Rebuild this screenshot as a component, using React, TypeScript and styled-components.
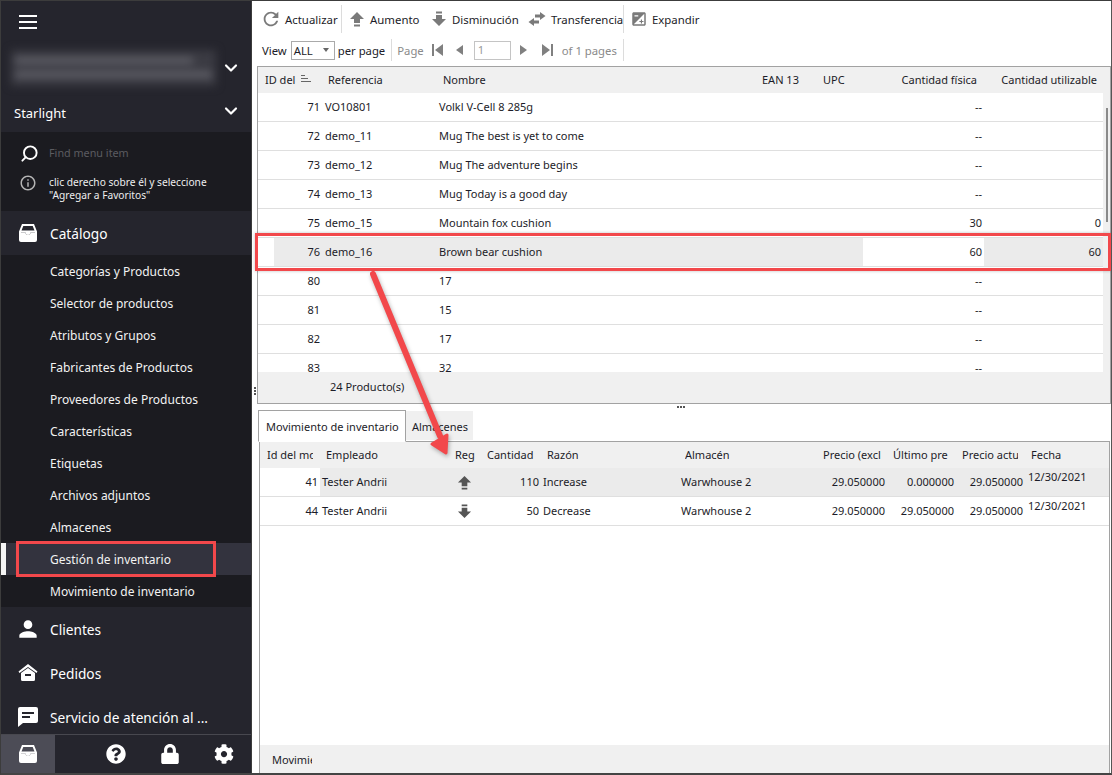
import React from 'react';
import styled, { createGlobalStyle } from 'styled-components';
import { MdExposure, MdInfoOutline, MdPerson, MdRefresh } from 'react-icons/md';
import { FaCog, FaLock, FaQuestionCircle } from 'react-icons/fa';
import { FiChevronDown, FiSearch } from 'react-icons/fi';

const GlobalStyle = createGlobalStyle`
    html, body {
        margin: 0;
        padding: 0;
        background: #fff;
    }
    body {
        font-family: "Noto Sans", "Open Sans", sans-serif;
        font-size: 11px;
        color: #1c1c28;
    }
`;

const TOP_COLUMNS = '64px 114px 322px 61px 44px 121px 119px';
const LOW_COLUMNS = '60px 128px 33px 60px 138px 138px 70px 69px 69px 1fr';

const Window = styled.div`
    position: relative;
    width: 1112px;
    height: 775px;
    box-sizing: border-box;
    display: flex;
    overflow: hidden;
    border-top: 1px solid #3c3c3c;
    border-left: 1px solid #3c3c3c;
    border-right: 1px solid #555;
    border-bottom: 2px solid #444;
`;

/* sidebar */
const Sidebar = styled.aside`
    width: 250px;
    flex: none;
    display: flex;
    flex-direction: column;
    background: #25252d;
    color: #fff;
`;
const NavArea = styled.div`
    flex: 1;
    min-height: 0;
    overflow: hidden;
`;
const Burger = styled.div`
    height: 49px;
    padding: 14px 0 0 18px;
    box-sizing: border-box;
    span {
        display: block;
        width: 18px;
        height: 2px;
        background: #fff;
        margin-bottom: 4px;
    }
`;
const AccountRow = styled.div`
    height: 38px;
    box-sizing: border-box;
    display: flex;
    align-items: center;
    padding: 0 10px 3px;
    justify-content: space-between;
    font-size: 20px;
    svg { stroke-width: 2.6; }
`;
const Blurred = styled.div`
    width: 205px;
    height: 36px;
    background: #3b3b43;
    filter: blur(4px);
    display: flex;
    flex-direction: column;
    justify-content: center;
    gap: 9px;
    padding: 0 4px;
    box-sizing: border-box;
    span {
        display: block;
        height: 5px;
        background: #6a6a72;
    }
    span:first-child { width: 178px; }
`;
const StoreRow = styled.div`
    height: 44px;
    display: flex;
    align-items: center;
    justify-content: space-between;
    padding: 6px 10px 0 13px;
    box-sizing: border-box;
    font-size: 13px;
    svg {
        font-size: 20px;
        stroke-width: 2.6;
        margin-top: -4px;
    }
`;
const SearchBlock = styled.div`
    height: 79px;
    background: #1b1b20;
    padding: 0 0 0 19px;
    box-sizing: border-box;
`;
const SearchLine = styled.div`
    height: 42px;
    display: flex;
    align-items: center;
    gap: 10px;
    color: #5b5b60;
    font-size: 10.8px;
    svg {
        color: #fff;
        font-size: 19px;
        stroke-width: 2.4;
        transform: scaleX(-1);
    }
    span { padding-bottom: 1px; }
`;
const InfoLine = styled.div`
    display: flex;
    gap: 12px;
    font-size: 10.2px;
    line-height: 13px;
    color: #eee;
    svg {
        color: #b4b4b4;
        font-size: 18px;
        margin-left: -1px;
        flex: none;
    }
    div { padding-top: 2px; }
`;
const SectionHead = styled.div`
    height: 44px;
    display: flex;
    align-items: center;
    gap: 12px;
    padding-left: 17px;
    font-size: 13.7px;
    white-space: nowrap;
    svg {
        width: 20px;
        height: 20px;
        flex: none;
        fill: #fff;
    }
    .person {
        width: 26px;
        height: 26px;
        margin: 0 -3px;
    }
`;
const SubMenu = styled.div`
    background: #1b1b20;
`;
const SubItem = styled.div<{ $active?: boolean }>`
    position: relative;
    height: 32px;
    display: flex;
    align-items: center;
    padding-left: 49px;
    font-size: 12px;
    background: ${p => (p.$active ? '#33333e' : 'transparent')};
    box-shadow: ${p => (p.$active ? 'inset 5px 0 0 #f4f4f4' : 'none')};
    color: #f2f2f2;
`;
const MenuMarker = styled.div`
    position: absolute;
    left: 15px;
    top: -2px;
    width: 200px;
    height: 36px;
    box-sizing: border-box;
    border: 3px solid #f2484b;
`;
const SideFooter = styled.div`
    height: 38px;
    flex: none;
    display: flex;
    align-items: center;
    border-top: 1px solid #48484f;
    background: #25252d;
    svg {
        width: 20px;
        height: 20px;
        color: #fff;
        fill: #fff;
    }
`;
const FooterTile = styled.div`
    width: 54px;
    height: 100%;
    background: #4c4c56;
    display: flex;
    align-items: center;
    justify-content: center;
    margin-right: 34px;
`;
const FooterIcon = styled.div`
    width: 54px;
    display: flex;
    justify-content: center;
`;

/* main */
const Main = styled.main`
    flex: 1;
    min-width: 0;
    display: flex;
    flex-direction: column;
    background: #fff;
    border-left: 1px solid #3c3c3c;
`;
const Toolbar = styled.div`
    height: 28px;
    margin-top: 4px;
    display: flex;
    align-items: center;
    padding-left: 11px;
    font-size: 11.4px;
    white-space: nowrap;
`;
const ToolButton = styled.div<{ $width: number; $inset?: number }>`
    width: ${p => p.$width}px;
    padding-left: ${p => p.$inset ?? 0}px;
    box-sizing: border-box;
    flex: none;
    display: flex;
    align-items: center;
    gap: 5px;
    svg {
        flex: none;
        color: #7a7a7a;
        fill: #7a7a7a;
    }
    .refresh { margin: 0 -2px 0 -3px; }
    .expand { margin-right: -1px; }
`;
const ToolSep = styled.div`
    width: 1px;
    height: 28px;
    background: #dcdcdc;
    flex: none;
`;
const Pager = styled.div`
    height: 26px;
    margin: 4px 0 3px;
    display: flex;
    align-items: center;
    padding-left: 10px;
    white-space: nowrap;
    font-size: 11.3px;
`;
const PagerText = styled.span<{ $muted?: boolean; $left?: number }>`
    color: ${p => (p.$muted ? '#8a8a8a' : '#1c1c28')};
    margin-left: ${p => p.$left ?? 0}px;
`;
const Select = styled.div`
    width: 44px;
    height: 19px;
    margin: 0 3px 0 4px;
    box-sizing: border-box;
    border: 1px solid #aaa;
    display: flex;
    align-items: center;
    justify-content: space-between;
    padding: 0 5px 0 2px;
    &::after {
        content: '';
        border: 3px solid transparent;
        border-top: 4px solid #666;
        border-bottom: 0;
    }
`;
const PagerSep = styled.div<{ $gap: number }>`
    width: 1px;
    height: 22px;
    background: #dcdcdc;
    margin: 0 ${p => p.$gap}px 0 6px;
`;
const PagerIcon = styled.svg<{ $gap: number }>`
    width: 12px;
    height: 14px;
    fill: #808080;
    flex: none;
    margin: 0 ${p => p.$gap}px;
`;
const PageInput = styled.div`
    width: 37px;
    height: 19px;
    margin-left: 8px;
    box-sizing: border-box;
    border: 1px solid #c4c4c4;
    color: #999;
    padding-left: 3px;
    line-height: 15px;
`;

const TopPane = styled.div`
    display: flex;
    height: 338px;
    flex: none;
`;
const SideGrip = styled.div`
    width: 5px;
    flex: none;
    display: flex;
    flex-direction: column;
    justify-content: flex-end;
    align-items: center;
    gap: 1px;
    padding-bottom: 9px;
    box-sizing: border-box;
    i {
        display: block;
        width: 2px;
        height: 2px;
        background: #555;
    }
`;
const TopTable = styled.section`
    position: relative;
    flex: 1;
    display: flex;
    box-sizing: border-box;
    border: 1px solid #a2a2a2;
`;
const TopBody = styled.div`
    width: 845px;
    flex: none;
    display: flex;
    flex-direction: column;
`;
const ScrollTrack = styled.div`
    flex: 1;
    background: #f0f0f0;
    padding: 41px 0 0 3px;
    box-sizing: border-box;
    &::before {
        content: '';
        display: block;
        width: 2px;
        height: 114px;
        background: #8a8a8a;
    }
`;
const HeaderRow = styled.div<{ $columns: string }>`
    height: 26px;
    flex: none;
    display: grid;
    grid-template-columns: ${p => p.$columns};
    align-items: center;
    background: #f0f0f0;
    font-size: 11px;
    white-space: nowrap;
`;
const HeadCell = styled.div<{ $left?: number; $right?: number; $end?: boolean }>`
    display: flex;
    align-items: center;
    justify-content: ${p => (p.$end ? 'flex-end' : 'flex-start')};
    margin: 0 ${p => p.$right ?? 7}px 2px ${p => p.$left ?? 6}px;
    overflow: hidden;
    svg {
        margin-left: 6px;
        flex: none;
    }
`;
const Viewport = styled.div`
    height: 279px;
    flex: none;
    overflow: hidden;
`;
const DataRow = styled.div<{ $columns: string; $selected?: boolean }>`
    height: 29px;
    box-sizing: border-box;
    display: grid;
    grid-template-columns: ${p => p.$columns};
    align-items: stretch;
    border-bottom: 1px solid #dfdfdf;
    background: ${p => (p.$selected ? '#ebebeb' : '#fff')};
    font-size: 11px;
    white-space: nowrap;
`;
const Cell = styled.div<{ $end?: boolean; $white?: boolean; $gutter?: boolean; $pad?: number }>`
    display: flex;
    align-items: center;
    justify-content: ${p => (p.$end ? 'flex-end' : 'flex-start')};
    padding: ${p => (p.$end ? '0 2px 2px 0' : `0 0 2px ${p.$pad ?? 3}px`)};
    background: ${p =>
        p.$white ? '#fff' : p.$gutter ? 'linear-gradient(90deg, #fff 16px, transparent 16px)' : 'transparent'};
`;
const DateCell = styled.div`
    padding: 1px 0 0 3px;
`;
const MoveIcon = styled.div`
    display: flex;
    align-items: center;
    padding-left: 9px;
    fill: #555;
`;
const TopFooter = styled.div`
    flex: 1;
    background: #f0f0f0;
    display: flex;
    align-items: center;
    padding-left: 72px;
    padding-bottom: 3px;
    font-size: 11px;
`;
const RowMarker = styled.div`
    position: absolute;
    left: -3px;
    right: -1px;
    top: 166px;
    height: 38px;
    box-sizing: border-box;
    border: 3px solid #f2484b;
    box-shadow: 0 0 3px rgba(0, 0, 0, 0.25);
`;
const SplitBar = styled.div`
    height: 6px;
    flex: none;
    display: flex;
    justify-content: center;
    align-items: center;
    gap: 1px;
    padding-right: 2px;
    i {
        display: block;
        width: 2px;
        height: 2px;
        background: #555;
    }
`;
const LowerPane = styled.div`
    flex: 1;
    min-height: 0;
    margin: 0 1px 0 6px;
    display: flex;
    flex-direction: column;
`;
const Tabs = styled.div`
    display: flex;
    height: 32px;
    flex: none;
    position: relative;
    z-index: 1;
    margin-bottom: -1px;
`;
const Tab = styled.div<{ $active?: boolean }>`
    box-sizing: border-box;
    display: flex;
    align-items: center;
    white-space: nowrap;
    font-size: 11px;
    ${p =>
        p.$active
            ? `
        width: 148px;
        padding: 0 0 0 7px;
        background: #fff;
        border: 1px solid #a2a2a2;
        border-bottom: 1px solid #fff;
    `
            : `
        width: 67px;
        padding: 1px 0 0 6px;
        margin: 1px 0 2px;
        background: #f0f0f0;
    `}
`;
const LowerTable = styled.section`
    flex: 1;
    min-height: 0;
    margin-left: 1px;
    display: flex;
    flex-direction: column;
    box-sizing: border-box;
    border: 1px solid #a2a2a2;
    border-bottom: 0;
`;
const LowerFill = styled.div`
    flex: 1;
`;
const LowerFooter = styled.div`
    height: 28px;
    flex: none;
    background: #f0f0f0;
    display: flex;
    align-items: center;
    font-size: 11px;
    padding-left: 12px;
    span {
        display: block;
        width: 40px;
        overflow: hidden;
    }
`;
const Arrow = styled.svg`
    position: absolute;
    z-index: 2;
    left: 349px;
    top: 259px;
    width: 120px;
    height: 210px;
    filter: drop-shadow(1px 2px 2px rgba(0, 0, 0, 0.3));
`;

const CatalogIcon = () => (
    <svg viewBox="0 0 20 20">
        <path d="M4 1h12l3 7.500V17a2 2 0 0 1-2 2H3a2 2 0 0 1-2-2V8.500zM5.300 3 3.500 7.500h13L14.700 3zM3 9.500V17h14V9.500h-4.500a2.500 2.500 0 0 1-5 0z" fillRule="evenodd" />
        <path d="M3 9.500h4.500a2.500 2.500 0 0 0 5 0H17V17H3z" />
    </svg>
);

const OrdersIcon = () => (
    <svg viewBox="0 0 20 20">
        <path d="M10 1 19.500 8.500l-1 1.500L10 4 1.500 10l-1-1.500zM3 10l7-5 7 5v6.500a1.500 1.500 0 0 1-1.500 1.500h-11A1.500 1.500 0 0 1 3 16.500zM7 11v2h6v-2z" fillRule="evenodd" />
    </svg>
);

const ChatIcon = () => (
    <svg viewBox="0 0 20 20">
        <path d="M2 0h16a2 2 0 0 1 2 2v12a2 2 0 0 1-2 2H5l-5 4V2a2 2 0 0 1 2-2zM4 5v2h12V5zM4 9v2h8V9z" fillRule="evenodd" />
    </svg>
);

const StepUp = ({ size = 16 }: { size?: number }) => (
    <svg viewBox="0 0 14 16" width={size} height={size}>
        <path d="M7 1 14 8H10V12H4V8H0zM4 13.500h6V15.500H4z" />
    </svg>
);

const StepDown = ({ size = 16 }: { size?: number }) => (
    <svg viewBox="0 0 14 16" width={size} height={size}>
        <path d="M4 .5h6V2.500H4zM4 4h6V8h4L7 15 0 8h4z" />
    </svg>
);

const TransferIcon = () => (
    <svg viewBox="0 0 18 16" width={18} height={16}>
        <path d="M12 1 17.500 5 12 9V6.500H7V3.500H12zM6 7v2.500H11v3H6V15L.5 11z" />
    </svg>
);

const SortIcon = () => (
    <svg viewBox="0 0 10 8" width={10} height={8}>
        <path d="M0 0h4v1H0zM0 3h7v1H0zM0 6h10v1H0z" fill="#666" />
    </svg>
);

const menuItems = [
    'Categorías y Productos',
    'Selector de productos',
    'Atributos y Grupos',
    'Fabricantes de Productos',
    'Proveedores de Productos',
    'Características',
    'Etiquetas',
    'Archivos adjuntos',
    'Almacenes',
    'Gestión de inventario',
    'Movimiento de inventario'
];

const products = [
    { id: 71, ref: 'VO10801', name: 'Volkl V-Cell 8 285g', real: '--', usable: '' },
    { id: 72, ref: 'demo_11', name: 'Mug The best is yet to come', real: '--', usable: '' },
    { id: 73, ref: 'demo_12', name: 'Mug The adventure begins', real: '--', usable: '' },
    { id: 74, ref: 'demo_13', name: 'Mug Today is a good day', real: '--', usable: '' },
    { id: 75, ref: 'demo_15', name: 'Mountain fox cushion', real: '30', usable: '0' },
    { id: 76, ref: 'demo_16', name: 'Brown bear cushion', real: '60', usable: '60' },
    { id: 80, ref: '', name: '17', real: '--', usable: '' },
    { id: 81, ref: '', name: '15', real: '--', usable: '' },
    { id: 82, ref: '', name: '17', real: '--', usable: '' },
    { id: 83, ref: '', name: '32', real: '--', usable: '' }
];

const movements = [
    { id: 41, up: true, qty: '110', reason: 'Increase', last: '0.000000' },
    { id: 44, up: false, qty: '50', reason: 'Decrease', last: '29.050000' }
];

const App: React.FC = () => {
    return (
        <Window>
            <GlobalStyle />
            <Sidebar>
                <NavArea>
                    <Burger><span /><span /><span /></Burger>
                    <AccountRow>
                        <Blurred><span /><span /></Blurred>
                        <FiChevronDown />
                    </AccountRow>
                    <StoreRow>
                        Starlight
                        <FiChevronDown />
                    </StoreRow>
                    <SearchBlock>
                        <SearchLine><FiSearch /><span>Find menu item</span></SearchLine>
                        <InfoLine>
                            <MdInfoOutline />
                            <div>clic derecho sobre él y seleccione<br />"Agregar a Favoritos"</div>
                        </InfoLine>
                    </SearchBlock>
                    <SectionHead><CatalogIcon />Catálogo</SectionHead>
                    <SubMenu>
                        {menuItems.map(item => (
                            <SubItem key={item} $active={item === 'Gestión de inventario'}>
                                {item}
                                {item === 'Gestión de inventario' && <MenuMarker />}
                            </SubItem>
                        ))}
                    </SubMenu>
                    <SectionHead><MdPerson className="person" />Clientes</SectionHead>
                    <SectionHead><OrdersIcon />Pedidos</SectionHead>
                    <SectionHead><ChatIcon />Servicio de atención al ...</SectionHead>
                </NavArea>
                <SideFooter>
                    <FooterTile><CatalogIcon /></FooterTile>
                    <FooterIcon><FaQuestionCircle /></FooterIcon>
                    <FooterIcon><FaLock /></FooterIcon>
                    <FooterIcon><FaCog /></FooterIcon>
                </SideFooter>
            </Sidebar>

            <Main>
                <Toolbar>
                    <ToolButton $width={78}><MdRefresh className="refresh" size={22} />Actualizar</ToolButton>
                    <ToolSep />
                    <ToolButton $width={89} $inset={7}><StepUp />Aumento</ToolButton>
                    <ToolButton $width={97}><StepDown />Disminución</ToolButton>
                    <ToolButton $width={95}><TransferIcon />Transferencia</ToolButton>
                    <ToolSep />
                    <ToolButton $width={90} $inset={6}><MdExposure className="expand" size={18} />Expandir</ToolButton>
                </Toolbar>
                <Pager>
                    <PagerText>View</PagerText>
                    <Select>ALL</Select>
                    <PagerText>per page</PagerText>
                    <PagerSep $gap={5} />
                    <PagerText $muted>Page</PagerText>
                    <PagerIcon $gap={8} viewBox="0 0 12 14"><path d="M0 1h2v12H0zM11 1v12L3 7z" /></PagerIcon>
                    <PagerIcon $gap={1} viewBox="0 0 12 14"><path d="M10 2v10L3 7z" /></PagerIcon>
                    <PageInput>1</PageInput>
                    <PagerIcon $gap={7} viewBox="0 0 12 14"><path d="M2 2v10l7-5z" /></PagerIcon>
                    <PagerIcon $gap={4} viewBox="0 0 12 14"><path d="M1 1v12l8-6zM10 1h2v12h-2z" /></PagerIcon>
                    <PagerText $muted $left={5}>of 1 pages</PagerText>
                    <PagerSep $gap={0} />
                </Pager>
                <TopPane>
                    <SideGrip><i /><i /><i /></SideGrip>
                    <TopTable>
                        <TopBody>
                            <HeaderRow $columns={TOP_COLUMNS}>
                                <HeadCell $left={7} $right={0}>ID del<SortIcon /></HeadCell>
                                <HeadCell>Referencia</HeadCell>
                                <HeadCell $left={7}>Nombre</HeadCell>
                                <HeadCell $left={4}>EAN 13</HeadCell>
                                <HeadCell $left={4}>UPC</HeadCell>
                                <HeadCell $end>Cantidad física</HeadCell>
                                <HeadCell $end $left={0} $right={6}>Cantidad utilizable</HeadCell>
                            </HeaderRow>
                            <Viewport>
                                {products.map(p => (
                                    <DataRow key={p.id} $columns={TOP_COLUMNS} $selected={p.id === 76}>
                                        <Cell $end $gutter={p.id === 76}>{p.id}</Cell>
                                        <Cell>{p.ref}</Cell>
                                        <Cell>{p.name}</Cell>
                                        <Cell />
                                        <Cell />
                                        <Cell $end $white={p.id === 76}>{p.real}</Cell>
                                        <Cell $end>{p.usable}</Cell>
                                    </DataRow>
                                ))}
                            </Viewport>
                            <TopFooter>24 Producto(s)</TopFooter>
                        </TopBody>
                        <ScrollTrack />
                        <RowMarker />
                    </TopTable>
                </TopPane>
                <SplitBar><i /><i /><i /></SplitBar>
                <LowerPane>
                    <Tabs>
                        <Tab $active>Movimiento de inventario</Tab>
                        <Tab>Almacenes</Tab>
                    </Tabs>
                    <LowerTable>
                        <HeaderRow $columns={LOW_COLUMNS}>
                            <HeadCell $left={7}>Id del mo</HeadCell>
                            <HeadCell>Empleado</HeadCell>
                            <HeadCell $left={7} $right={0}>Reg</HeadCell>
                            <HeadCell $right={0}>Cantidad</HeadCell>
                            <HeadCell>Razón</HeadCell>
                            <HeadCell>Almacén</HeadCell>
                            <HeadCell $right={6}>Precio (excl</HeadCell>
                            <HeadCell $right={8}>Último pre</HeadCell>
                            <HeadCell>Precio actu</HeadCell>
                            <HeadCell>Fecha</HeadCell>
                        </HeaderRow>
                        {movements.map(m => (
                            <DataRow key={m.id} $columns={LOW_COLUMNS} $selected={m.up}>
                                <Cell $end $white>{m.id}</Cell>
                                <Cell $pad={2}>Tester Andrii</Cell>
                                <MoveIcon>{m.up ? <StepUp size={15} /> : <StepDown size={15} />}</MoveIcon>
                                <Cell $end>{m.qty}</Cell>
                                <Cell $pad={2}>{m.reason}</Cell>
                                <Cell $pad={2}>Warwhouse 2</Cell>
                                <Cell $end>29.050000</Cell>
                                <Cell $end>{m.last}</Cell>
                                <Cell $end>29.050000</Cell>
                                <DateCell>12/30/2021</DateCell>
                            </DataRow>
                        ))}
                        <LowerFill />
                        <LowerFooter><span>Movimie</span></LowerFooter>
                    </LowerTable>
                </LowerPane>
            </Main>

            <Arrow viewBox="0 0 120 210">
                <path d="M23 14 L90 176" stroke="#f2484b" strokeWidth="6" strokeLinecap="round" fill="none" />
                <path d="M96 193 L82 184 L97 175 Z" fill="#f2484b" stroke="#f2484b" strokeWidth="3" strokeLinejoin="round" />
            </Arrow>
        </Window>
    );
};

export default App;
